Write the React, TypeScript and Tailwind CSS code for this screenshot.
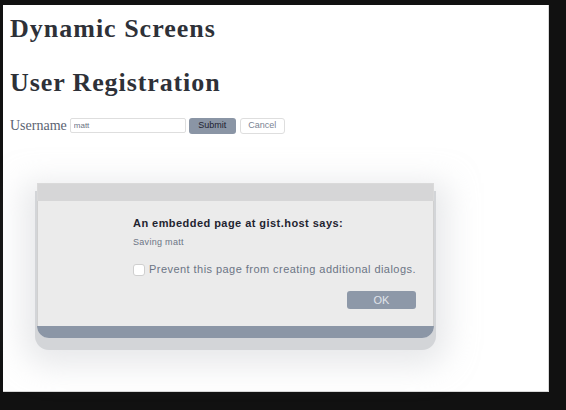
import React from 'react';

export default function App() {
  return (
    <div className="w-[566px] h-[410px] bg-[#111111] pt-[5px] pl-[3px]">
      <div className="relative w-[546px] h-[387px] bg-white border-r border-b border-[#d8d8d8]">
        {/* page content */}
        <div className="pl-[7px] pt-[9px] font-['Liberation_Serif',serif] text-[#2e3138]">
          <h1 className="text-[26px] font-bold leading-[30px] tracking-[1px]">Dynamic Screens</h1>
          <h2 className="mt-[24px] text-[26px] font-bold leading-[30px] tracking-[0.9px]">User Registration</h2>
          <div className="mt-[17px] flex items-center">
            <span className="text-[14px] text-[#5b6372]">Username</span>
            <input
              className="ml-[3px] w-[116px] h-[15px] border border-[#dedede] rounded-[2px] px-[3px] text-[8px] font-['Liberation_Sans',sans-serif] text-[#6b7383] outline-none"
              defaultValue="matt"
            />
            <button className="ml-[3px] w-[47px] h-[16px] rounded-[3px] bg-[#8a95a5] text-[9px] font-['Liberation_Sans',sans-serif] text-[#1d2230]">
              Submit
            </button>
            <button className="ml-[4px] w-[45px] h-[16px] rounded-[3px] border border-[#dedede] bg-white text-[9px] font-['Liberation_Sans',sans-serif] text-[#7a8392]">
              Cancel
            </button>
          </div>
        </div>

        {/* alert dialog overlay */}
        <div className="absolute left-[34px] top-[178px] w-[397px] font-['Liberation_Sans',sans-serif] rounded-b-[12px] shadow-[0_10px_0_2px_#d3d5d8,0_14px_30px_14px_rgba(210,212,216,0.5)]">
          <div className="h-[18px] bg-[#d6d6d7] border-x border-t border-[#dadada]" />
          <div className="h-[125px] bg-[#ebebeb] pl-[95px] pr-[17px] pt-[16px] border-x border-[#d0d0d0]">
            <div className="text-[11px] leading-[13px] font-bold tracking-[0.45px] text-[#1f2430]">An embedded page at gist.host says:</div>
            <div className="mt-[7px] text-[9px] leading-[11px] tracking-[0.3px] text-[#6b7585]">Saving matt</div>
            <label className="mt-[15px] flex items-center gap-[4px] whitespace-nowrap">
              <span className="w-[12px] h-[12px] shrink-0 rounded-[3px] border border-[#cfcfcf] bg-white" />
              <span className="text-[11px] leading-[13px] tracking-[0.45px] text-[#6b7585]">Prevent this page from creating additional dialogs.</span>
            </label>
            <div className="mt-[15px] flex justify-end">
              <button className="w-[69px] h-[18px] rounded-[3px] bg-[#8d98a8] text-[11px] text-[#e0e4ea]">OK</button>
            </div>
          </div>
          <div className="h-[12px] bg-[#8b96a6] rounded-b-[12px]" />
        </div>
      </div>
    </div>
  );
}
